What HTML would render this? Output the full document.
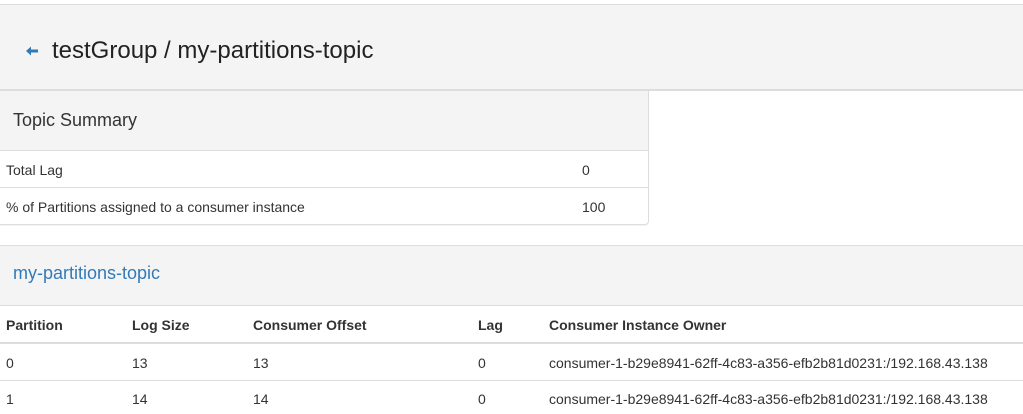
<!DOCTYPE html>
<html><head><style>
body{margin:0;width:1023px;height:414px;background:#fff;font-family:"Liberation Sans",Arial,sans-serif;color:#333;position:relative;overflow:hidden}
.a{position:absolute;white-space:nowrap}
.t{font-size:14px;line-height:16px}
.b{font-weight:bold}
</style></head><body>
<div class="a" style="left:0;top:4px;width:1023px;height:1px;background:#ddd"></div>
<div class="a" style="left:0;top:5px;width:1023px;height:84px;background:#f4f4f4"></div>
<div class="a" style="left:0;top:89px;width:1023px;height:2px;background:#ddd"></div>
<svg class="a" style="left:25px;top:45px" width="14" height="12" viewBox="0 0 14 12"><path d="M1 6 L6 1.5 L6 4.5 L13 4.5 L13 7.5 L6 7.5 L6 10.5 Z" fill="#337ab7"/></svg>
<div class="a" style="left:52px;top:37px;font-size:24px;line-height:28px;color:#222">testGroup / my-partitions-topic</div>

<div class="a" style="left:-1px;top:90px;width:648px;height:133px;border:1px solid #ddd;border-radius:0 0 4px 0;box-shadow:0 1px 1px rgba(0,0,0,.05)"></div>
<div class="a" style="left:0;top:91px;width:648px;height:59px;background:#f4f4f4;border-bottom:1px solid #ddd"></div>
<div class="a" style="left:13px;top:110px;font-size:18px;line-height:20px">Topic Summary</div>
<div class="a t" style="left:6px;top:162px">Total Lag</div>
<div class="a t" style="left:582px;top:162px">0</div>
<div class="a" style="left:0;top:187px;width:648px;height:1px;background:#ddd"></div>
<div class="a t" style="left:6px;top:199px">% of Partitions assigned to a consumer instance</div>
<div class="a t" style="left:582px;top:199px">100</div>

<div class="a" style="left:0;top:245px;width:1023px;height:1px;background:#ddd"></div>
<div class="a" style="left:0;top:246px;width:1023px;height:59px;background:#f4f4f4;border-bottom:1px solid #ddd"></div>
<div class="a" style="left:13px;top:263px;font-size:18px;line-height:20px;color:#337ab7">my-partitions-topic</div>

<div class="a t b" style="left:6px;top:317px">Partition</div>
<div class="a t b" style="left:132px;top:317px">Log Size</div>
<div class="a t b" style="left:253px;top:317px">Consumer Offset</div>
<div class="a t b" style="left:478px;top:317px">Lag</div>
<div class="a t b" style="left:549px;top:317px">Consumer Instance Owner</div>
<div class="a" style="left:0;top:342px;width:1023px;height:2px;background:#ddd"></div>
<div class="a t" style="left:6px;top:355px">0</div>
<div class="a t" style="left:132px;top:355px">13</div>
<div class="a t" style="left:253px;top:355px">13</div>
<div class="a t" style="left:478px;top:355px">0</div>
<div class="a t" style="left:549px;top:355px">consumer-1-b29e8941-62ff-4c83-a356-efb2b81d0231:/192.168.43.138</div>
<div class="a" style="left:0;top:380px;width:1023px;height:1px;background:#ddd"></div>
<div class="a t" style="left:6px;top:391px">1</div>
<div class="a t" style="left:132px;top:391px">14</div>
<div class="a t" style="left:253px;top:391px">14</div>
<div class="a t" style="left:478px;top:391px">0</div>
<div class="a t" style="left:549px;top:391px">consumer-1-b29e8941-62ff-4c83-a356-efb2b81d0231:/192.168.43.138</div>
</body></html>
